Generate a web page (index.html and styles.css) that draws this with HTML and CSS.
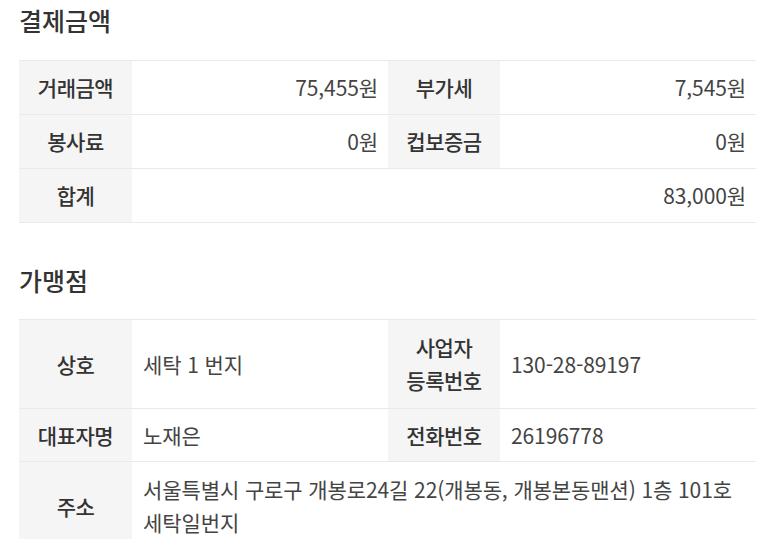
FILE: index.html
```html
<!DOCTYPE html>
<html lang="ko">
<head>
<meta charset="utf-8">
<link rel="stylesheet" href="styles.css">
</head>
<body>
<div class="page">
  <h2 class="section-title first">결제금액</h2>
  <table class="info">
    <colgroup><col class="c-label"><col class="c-value"><col class="c-label2"><col class="c-value"></colgroup>
    <tr class="r54">
      <th>거래금액</th><td class="num">75,455원</td>
      <th>부가세</th><td class="num">7,545원</td>
    </tr>
    <tr class="r54">
      <th>봉사료</th><td class="num">0원</td>
      <th>컵보증금</th><td class="num">0원</td>
    </tr>
    <tr class="r54">
      <th>합계</th><td class="num" colspan="3">83,000원</td>
    </tr>
  </table>

  <h2 class="section-title">가맹점</h2>
  <table class="info">
    <colgroup><col class="c-label"><col class="c-value"><col class="c-label2"><col class="c-value"></colgroup>
    <tr class="r89">
      <th>상호</th><td>세탁 1 번지</td>
      <th>사업자<br>등록번호</th><td>130-28-89197</td>
    </tr>
    <tr class="r53">
      <th>대표자명</th><td>노재은</td>
      <th>전화번호</th><td>26196778</td>
    </tr>
    <tr class="r-addr">
      <th>주소</th><td colspan="3">서울특별시 구로구 개봉로24길 22(개봉동, 개봉본동맨션) 1층 101호<br>세탁일번지</td>
    </tr>
  </table>
</div>
</body>
</html>
```
FILE: styles.css
```css
html, body {
  margin: 0;
  padding: 0;
  background: #ffffff;
}
body {
  font-family: "Noto Sans CJK KR", "Noto Sans", sans-serif;
  color: #333;
}
.page {
  padding: 0 17px 0 19px;
}
.section-title {
  margin: 37px 0 19px 0;
  font-size: 25px;
  line-height: 40px;
  font-weight: 500;
  color: #333;
}
.section-title.first {
  margin-top: 0;
  margin-bottom: 20px;
}
.info {
  width: 737px;
  border-collapse: collapse;
  table-layout: fixed;
  border-top: 1px solid #e9e9e9;
}
.c-label { width: 113px; }
.c-label2 { width: 112px; }
.c-value { width: 256px; }
.info th, .info td {
  padding: 0 10px 0 11px;
  border-bottom: 1px solid #e9e9e9;
  font-size: 21px;
  line-height: 33px;
  vertical-align: middle;
}
.info th {
  background: #f5f5f5;
  font-weight: 500;
  color: #333;
  text-align: center;
  padding: 0;
  letter-spacing: -0.5px;
}
.info td {
  font-weight: 400;
  color: #444;
  text-align: left;
  letter-spacing: -0.1px;
}
.info td.num {
  text-align: right;
}
.r54 { height: 54px; }
.r53 { height: 53px; }
.r89 { height: 89px; }
.r-addr th, .r-addr td {
  padding-top: 11px;
  padding-bottom: 11px;
}
.r-addr th { padding-left: 0; padding-right: 0; }
```
